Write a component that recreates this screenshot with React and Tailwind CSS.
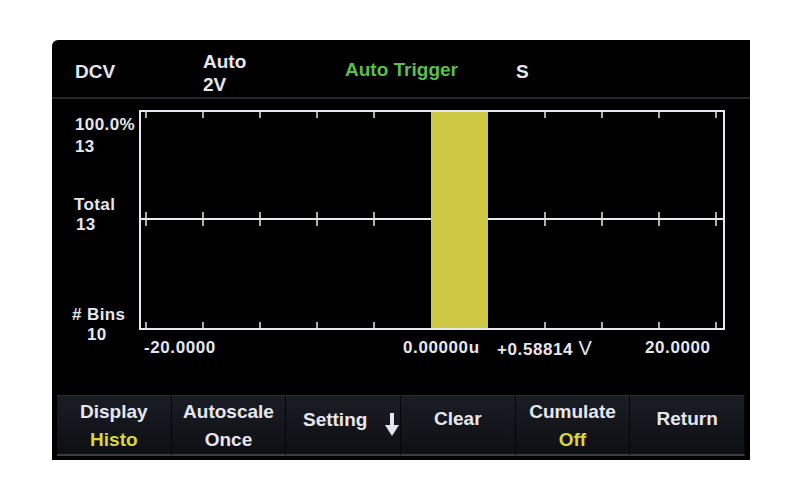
const font = { fontFamily: '"Liberation Sans", Arial, sans-serif' };

const ticks = [7, 64, 121, 178, 235, 292, 349, 406, 463, 520, 577];

function Histogram() {
  return (
    <svg width="588" height="222" viewBox="0 0 588 222" className="block">
      {/* bar */}
      <rect x="292" y="1" width="57" height="218" fill="#cdc944" />
      {/* frame */}
      <rect x="1" y="1" width="584" height="218" fill="none" stroke="#e8e8ee" strokeWidth="2" />
      {/* middle axis */}
      <line x1="1" y1="109" x2="292" y2="109" stroke="#e8e8ee" strokeWidth="2" />
      <line x1="349" y1="109" x2="585" y2="109" stroke="#e8e8ee" strokeWidth="2" />
      {ticks.map((x) => (
        <g key={x} stroke="#e8e8ee" strokeWidth="1.5">
          {(x < 292 || x > 349) && (
            <>
              <line x1={x} y1="1" x2={x} y2="8" />
              <line x1={x} y1="102" x2={x} y2="116" />
              <line x1={x} y1="212" x2={x} y2="219" />
            </>
          )}
        </g>
      ))}
    </svg>
  );
}

function DownArrow() {
  return (
    <svg width="14" height="23" viewBox="0 0 14 23" className="ml-[18px] mt-[8px]">
      <rect x="5" y="0" width="4" height="14" fill="#e6e6ef" />
      <path d="M0 12 L14 12 L7 23 Z" fill="#e6e6ef" />
    </svg>
  );
}

const menu = [
  { top: 'Display', bottom: 'Histo', yellow: true },
  { top: 'Autoscale', bottom: 'Once' },
  { top: 'Setting', arrow: true },
  { top: 'Clear' },
  { top: 'Cumulate', bottom: 'Off', yellow: true },
  { top: 'Return' },
];

export default function App() {
  return (
    <div className="w-[800px] h-[500px] bg-white pt-[40px] pl-[52px]" style={font}>
      <div className="w-[698px] h-[420px] bg-black rounded-tl-[6px] flex flex-col font-bold text-[#e6e6ef]">
        {/* header */}
        <div className="h-[57px] flex items-center text-[19px]">
          <div className="w-[151px] pl-[23px] pt-[8px]">DCV</div>
          <div className="w-[142px] leading-[23px] mt-[8px]">
            <div>Auto</div>
            <div>2V</div>
          </div>
          <div className="w-[171px] text-[#5bbf4c] pt-[4px]">Auto Trigger</div>
          <div className="pt-[8px]">S</div>
        </div>
        <div className="h-[2px] bg-[#26272c]" />

        {/* chart */}
        <div className="flex mt-[11px]">
          <div className="w-[87px] flex flex-col text-[17px] tracking-[0.4px]">
            <div className="pl-[23px] mt-[4px] leading-[22px]">
              <div>100.0%</div>
              <div>13</div>
            </div>
            <div className="pl-[22px] mt-[37px] leading-[20px]">
              <div>Total</div>
              <div className="pl-[2px]">13</div>
            </div>
            <div className="pl-[20px] mt-[70px] leading-[20px]">
              <div># Bins</div>
              <div className="pl-[15px]">10</div>
            </div>
          </div>
          <div className="flex flex-col">
            <Histogram />
            <div className="flex mt-[6px] leading-[20px] text-[17px] tracking-[0.6px]">
              <span className="w-[264px] pl-[5px]">-20.0000</span>
              <span className="w-[94px]">0.00000u</span>
              <span className="w-[148px]">
                +0.58814 <span className="font-normal text-[20px]">V</span>
              </span>
              <span>20.0000</span>
            </div>
          </div>
        </div>

        {/* softkey menu */}
        <div className="mt-auto mb-[4px] px-[5px] grid grid-cols-6 h-[61px]">
          {menu.map((m) => (
            <div
              key={m.top}
              className="flex flex-col items-center justify-center border-t border-t-[#2a2d35] border-b-2 border-b-[#3c3f47] border-r border-r-[#050607] bg-gradient-to-b from-[#1a1d24] to-[#0d0f13] text-[19px] leading-[28px]"
            >
              {m.arrow ? (
                <div className="flex items-center pl-[16px] pb-[10px]">
                  <span>{m.top}</span>
                  <DownArrow />
                </div>
              ) : m.bottom ? (
                <div className="pt-[2px]">
                  <div>{m.top}</div>
                  <div className={m.yellow ? 'text-[#d9d63b] text-center' : 'text-center'}>{m.bottom}</div>
                </div>
              ) : (
                <div className="pb-[12px]">{m.top}</div>
              )}
            </div>
          ))}
        </div>
      </div>
    </div>
  );
}
